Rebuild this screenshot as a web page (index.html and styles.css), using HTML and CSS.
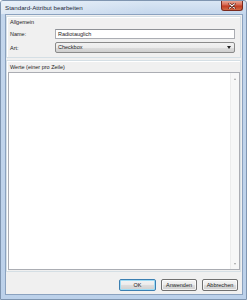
FILE: index.html
```html
<!DOCTYPE html>
<html lang="de">
<head>
    <meta charset="UTF-8">
    <meta name="viewport" content="width=device-width, initial-scale=1.0">
    <title>Standard-Attribut bearbeiten</title>
    <link rel="stylesheet" href="styles.css">
</head>
<body>
    <div class="window">
        <div class="titlebar">
            <span class="caption">Standard-Attribut bearbeiten</span>
            <div class="close-btn">
                <svg width="8" height="6" viewBox="0 0 8 6">
                    <path d="M1.5 0.8 L6.5 5.2 M6.5 0.8 L1.5 5.2" stroke="#5a2018" stroke-width="2.2" stroke-linecap="round"/>
                    <path d="M1.5 0.8 L6.5 5.2 M6.5 0.8 L1.5 5.2" stroke="#fff" stroke-width="1.1" stroke-linecap="round"/>
                </svg>
            </div>
        </div>

        <div class="client">
            <div class="group general">
                <div class="group-label">Allgemein</div>
                <div class="field-row">
                    <span class="field-label">Name:</span>
                    <div class="textbox">Radiotauglich</div>
                </div>
                <div class="field-row">
                    <span class="field-label">Art:</span>
                    <div class="combobox">
                        <span>Checkbox</span>
                        <span class="combo-arrow"></span>
                    </div>
                </div>
            </div>

            <div class="group values">
                <div class="group-label">Werte (einer pro Zeile)</div>
                <div class="listbox">
                    <div class="list-content"></div>
                    <div class="scrollbar">
                        <span class="arrow-up"></span>
                        <span class="arrow-down"></span>
                    </div>
                </div>
            </div>

            <div class="button-row">
                <button class="btn default">OK</button>
                <button class="btn">Anwenden</button>
                <button class="btn">Abbrechen</button>
            </div>
        </div>
    </div>
</body>
</html>
```

FILE: styles.css
```css
html, body {
    margin: 0;
    padding: 0;
}
body {
    width: 247px;
    height: 300px;
    overflow: hidden;
    font-family: "Liberation Sans", Arial, sans-serif;
    font-size: 5.5px;
    color: #1b1b1b;
}
.window {
    height: 300px;
    box-sizing: border-box;
    border: 1px solid #7f95b0;
    border-radius: 3px 3px 0 0;
    background: linear-gradient(to bottom, #d9e6f4 0, #c3d6ec 14px, #bcd1ea 100%);
    display: flex;
    flex-direction: column;
}
.titlebar {
    height: 13px;
    display: flex;
    align-items: flex-start;
    justify-content: space-between;
    background: linear-gradient(to right, rgba(255,255,255,0.45), rgba(255,255,255,0) 60%);
}
.caption {
    font-size: 6.2px;
    color: #1e2a3a;
    line-height: 13px;
    margin-left: 4px;
}
.close-btn {
    width: 22px;
    height: 10px;
    margin-right: 3px;
    box-sizing: border-box;
    border: 1px solid #7a2a1e;
    border-top: none;
    border-radius: 0 0 3px 3px;
    background: linear-gradient(to bottom, #e8a897 0, #d7664f 45%, #c13c23 55%, #d26a45 100%);
    display: flex;
    align-items: center;
    justify-content: center;
}
.close-btn svg {
    display: block;
}
.client {
    flex: 1;
    margin: 0 3px 4px 4px;
    border: 1px solid #8ba2bf;
    background-color: #f0f0f0;
    padding: 1px 1px 0 0;
    display: flex;
    flex-direction: column;
}
.group {
    border: 1px solid #d5dfe5;
    box-shadow: inset 1px 1px 0 #fff;
}
.general {
    height: 42px;
    box-sizing: border-box;
    padding: 1px 5px 0 3px;
}
.group-label {
    line-height: 8px;
    height: 8px;
}
.field-row {
    display: flex;
    align-items: center;
    margin-top: 3px;
}
.field-row + .field-row {
    margin-top: 3px;
}
.field-label {
    width: 45px;
}
.textbox {
    flex: 1;
    height: 10px;
    box-sizing: border-box;
    border: 1px solid #abadb3;
    border-top-color: #8e9196;
    background-color: #fff;
    padding-left: 2px;
    line-height: 8px;
}
.combobox {
    flex: 1;
    height: 11px;
    box-sizing: border-box;
    border: 1px solid #8a8a8a;
    border-radius: 2px;
    background: linear-gradient(to bottom, #f2f2f2 0, #ebebeb 50%, #dddddd 51%, #cfcfcf 100%);
    padding: 0 3px 0 2px;
    display: flex;
    align-items: center;
    justify-content: space-between;
    line-height: 9px;
}
.combo-arrow {
    width: 0;
    height: 0;
    border-left: 2px solid transparent;
    border-right: 2px solid transparent;
    border-top: 3px solid #222;
}
.values {
    margin-top: 2px;
    flex: 1;
    padding: 0 0 1px 1px;
    display: flex;
    flex-direction: column;
}
.values .group-label {
    padding-top: 2px;
    padding-left: 2px;
    margin-bottom: 1px;
}
.listbox {
    flex: 1;
    border: 1px solid #abadb3;
    background-color: #fff;
    display: flex;
}
.list-content {
    flex: 1;
}
.scrollbar {
    width: 8px;
    border-left: 1px solid #ececec;
    background-color: #f7f7f7;
    display: flex;
    flex-direction: column;
    justify-content: space-between;
    align-items: center;
    padding: 5px 0 4px;
}
.arrow-up, .arrow-down {
    width: 0;
    height: 0;
    border-left: 1.5px solid transparent;
    border-right: 1.5px solid transparent;
}
.arrow-up {
    border-bottom: 2px solid #a3a3a3;
}
.arrow-down {
    border-top: 2px solid #a3a3a3;
}
.button-row {
    height: 22px;
    box-sizing: border-box;
    padding: 7px 3px 0 0;
    display: flex;
    justify-content: flex-end;
    gap: 5px;
}
.btn {
    width: 36px;
    height: 12px;
    margin: 0;
    padding: 0;
    box-sizing: border-box;
    font-family: "Liberation Sans", Arial, sans-serif;
    font-size: 5.5px;
    color: #1b1b1b;
    border: 1px solid #707070;
    border-radius: 2px;
    background: linear-gradient(to bottom, #f4f4f4 0, #ebebeb 50%, #dddddd 51%, #cfcfcf 100%);
    box-shadow: inset 0 0 0 1px rgba(255,255,255,0.7);
}
.btn.default {
    width: 37px;
    border-color: #3c7fb1;
    box-shadow: inset 0 0 0 1px #9fdcf5;
}
```
